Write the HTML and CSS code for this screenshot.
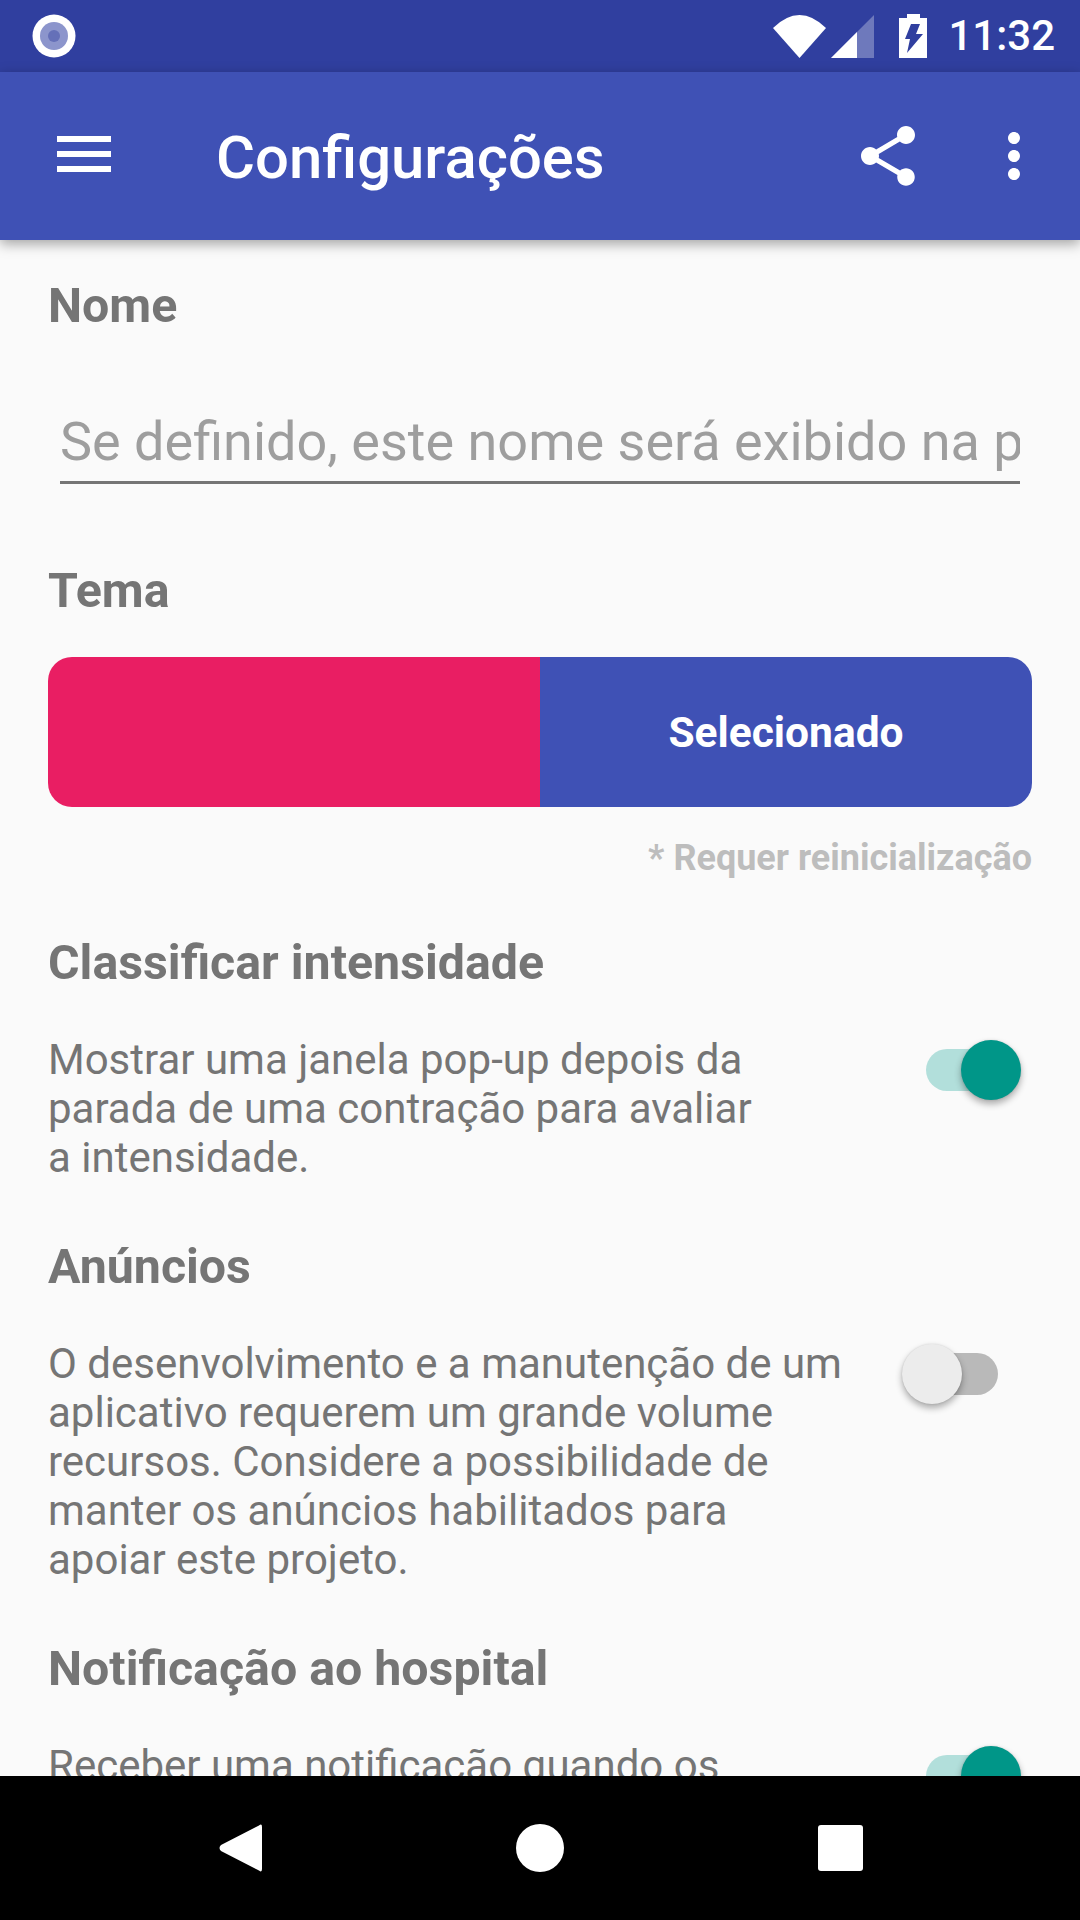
FILE: index.html
```html
<!DOCTYPE html>
<html lang="pt-br">
<head>
  <meta charset="UTF-8">
  <title>Configurações</title>
  <link rel="stylesheet" href="styles.css">
</head>
<body>

  <div class="status-bar">
    <svg class="notif-icon" width="44" height="44" viewBox="0 0 44 44">
      <circle cx="22" cy="22" r="21.5" fill="#fff"/>
      <circle cx="22" cy="22" r="14" fill="#8c95cc"/>
      <circle cx="22" cy="22" r="6" fill="#6570b8"/>
    </svg>
    <div class="status-right">
      <svg class="wifi-icon" width="53" height="43" viewBox="0 0 53 43">
        <path d="M0 13 Q26.5 -13 53 13 L26.5 43 Z" fill="#fff"/>
      </svg>
      <svg class="signal-icon" width="43" height="43" viewBox="0 0 43 43">
        <path d="M0 43 L43 0 V43 Z" fill="#fff" fill-opacity="0.3"/>
        <path d="M0 43 L26 17 V43 Z" fill="#fff"/>
      </svg>
      <svg class="battery-icon" width="28" height="44" viewBox="0 0 28 44">
        <path d="M8 0 H21 V4 H28 V44 H0 V4 H8 Z" fill="#fff"/>
        <path d="M12 10 H21 L17 20 H24 L8 39 L11 25 H6 Z" fill="#303f9f"/>
      </svg>
      <span class="clock">11:32</span>
    </div>
  </div>

  <div class="toolbar">
    <svg class="menu-icon" width="72" height="72" viewBox="0 0 24 24">
      <path d="M3 18h18v-2H3v2zm0-5h18v-2H3v2zm0-7v2h18V6H3z" fill="#fff"/>
    </svg>
    <h1 class="toolbar-title">Configurações</h1>
    <svg class="share-icon" width="72" height="72" viewBox="0 0 24 24">
      <path d="M18 16.08c-.76 0-1.44.3-1.96.77L8.91 12.7c.05-.23.09-.46.09-.7s-.04-.47-.09-.7l7.05-4.11c.54.5 1.25.81 2.04.81 1.66 0 3-1.34 3-3s-1.34-3-3-3-3 1.34-3 3c0 .24.04.47.09.7L8.04 9.81C7.5 9.31 6.79 9 6 9c-1.66 0-3 1.34-3 3s1.34 3 3 3c.79 0 1.5-.31 2.04-.81l7.12 4.16c-.05.21-.08.43-.08.65 0 1.61 1.31 2.92 2.92 2.92s2.92-1.31 2.92-2.92-1.31-2.92-2.92-2.92z" fill="#fff"/>
    </svg>
    <svg class="more-icon" width="72" height="72" viewBox="0 0 24 24">
      <path d="M12 8c1.1 0 2-.9 2-2s-.9-2-2-2-2 .9-2 2 .9 2 2 2zm0 2c-1.1 0-2 .9-2 2s.9 2 2 2 2-.9 2-2-.9-2-2-2zm0 6c-1.1 0-2 .9-2 2s.9 2 2 2 2-.9 2-2-.9-2-2-2z" fill="#fff"/>
    </svg>
  </div>

  <div class="content">
    <h2 class="section-title first">Nome</h2>
    <div class="name-input">Se definido, este nome será exibido na p</div>

    <h2 class="section-title theme-title">Tema</h2>
    <div class="theme-picker">
      <div class="theme-option pink"></div>
      <div class="theme-option indigo">Selecionado</div>
    </div>
    <div class="restart-note">* Requer reinicialização</div>

    <h2 class="section-title rate-title">Classificar intensidade</h2>
    <div class="setting-row">
      <p class="setting-text">Mostrar uma janela pop-up depois da<br>parada de uma contração para avaliar<br>a intensidade.</p>
      <div class="switch on"><span class="thumb"></span></div>
    </div>

    <h2 class="section-title">Anúncios</h2>
    <div class="setting-row">
      <p class="setting-text">O desenvolvimento e a manutenção de um<br>aplicativo requerem um grande volume<br>recursos. Considere a possibilidade de<br>manter os anúncios habilitados para<br>apoiar este projeto.</p>
      <div class="switch off"><span class="thumb"></span></div>
    </div>

    <h2 class="section-title">Notificação ao hospital</h2>
    <div class="setting-row">
      <p class="setting-text">Receber uma notificação quando os</p>
      <div class="switch on"><span class="thumb"></span></div>
    </div>
  </div>

  <div class="nav-bar">
    <svg class="nav-back" width="44" height="48" viewBox="0 0 44 48">
      <path d="M40 1.5 Q43 -1 43 3 V45 Q43 49 40 46.5 L2 27 Q-1 24 2 21 Z" fill="#fff"/>
    </svg>
    <span class="nav-home"></span>
    <span class="nav-recent"></span>
  </div>

</body>
</html>
```

FILE: styles.css
```css
* {
  box-sizing: border-box;
}

html, body {
  margin: 0;
  height: 100%;
}

body {
  width: 1080px;
  height: 1920px;
  display: flex;
  flex-direction: column;
  overflow: hidden;
  font-family: 'Roboto', 'Liberation Sans', sans-serif;
  background: #fafafa;
}

/* barra de status */
.status-bar {
  flex: none;
  height: 72px;
  background: #303f9f;
  display: flex;
  align-items: center;
  justify-content: space-between;
  padding: 0 25px 0 32px;
}

.status-right {
  display: flex;
  align-items: center;
  color: #fff;
}

.wifi-icon {
  margin-right: 5px;
}

.signal-icon {
  margin-right: 25px;
}

.battery-icon {
  margin-right: 21px;
}

.clock {
  font-size: 42px;
  font-weight: 500;
  line-height: 44px;
}

/* toolbar */
.toolbar {
  flex: none;
  height: 168px;
  background: #3f51b5;
  display: flex;
  align-items: center;
  padding-left: 48px;
  box-shadow: 0 4px 12px rgba(0, 0, 0, 0.35);
  position: relative;
  z-index: 1;
}

.menu-icon {
  margin-top: -4px;
}

.toolbar-title {
  margin: 4px 0 0 96px;
  flex: 1;
  font-size: 59.8px;
  font-weight: 500;
  color: #fff;
}

.more-icon {
  margin: 0 30px 0 54px;
}

/* conteudo */
.content {
  flex: 1;
  min-height: 0;
  overflow: hidden;
  padding: 0 48px;
}

.section-title {
  margin: 0;
  font-size: 48.3px;
  font-weight: 700;
  line-height: 56px;
  color: #757575;
}

.first {
  margin-top: 38px;
}

.name-input {
  margin: 77px 12px 0;
  height: 73px;
  border-bottom: 3px solid #757575;
  font-size: 54px;
  line-height: 62px;
  color: #9e9e9e;
  white-space: nowrap;
  overflow: hidden;
}

.theme-title {
  margin-top: 79px;
}

.theme-picker {
  margin-top: 38px;
  height: 150px;
  display: flex;
  border-radius: 24px;
  overflow: hidden;
}

.theme-option {
  flex: 1;
  display: flex;
  align-items: center;
  justify-content: center;
  font-size: 42.5px;
  font-weight: 700;
  color: #fff;
}

.pink {
  background: #e91e63;
}

.indigo {
  background: #3f51b5;
}

.restart-note {
  margin-top: 30px;
  text-align: right;
  font-size: 36px;
  font-weight: 700;
  line-height: 42px;
  color: #bdbdbd;
}

.rate-title {
  margin-top: 56px;
}

.setting-row {
  display: flex;
  justify-content: space-between;
  align-items: flex-start;
  margin-top: 44px;
  margin-bottom: 57px;
}

.setting-text {
  margin: 0;
  font-size: 42px;
  line-height: 49px;
  color: #757575;
}

/* switches */
.switch {
  flex: none;
  position: relative;
  width: 84px;
  height: 42px;
  margin-top: 14px;
  border-radius: 21px;
}

.switch.on {
  background: #b2dfdb;
  margin-right: 22px;
}

.switch.off {
  background: #b9b9b9;
  margin-right: 34px;
}

.thumb {
  position: absolute;
  top: -9px;
  width: 60px;
  height: 60px;
  border-radius: 50%;
  box-shadow: 0 4px 7px rgba(0, 0, 0, 0.32), 0 0 2px rgba(0, 0, 0, 0.12);
}

.on .thumb {
  right: -11px;
  background: #009688;
}

.off .thumb {
  left: -12px;
  background: #ececec;
}

/* barra de navegacao */
.nav-bar {
  flex: none;
  height: 144px;
  background: #000;
  position: relative;
  z-index: 2;
  display: flex;
  align-items: center;
  padding-left: 219px;
}

.nav-home {
  width: 48px;
  height: 48px;
  margin-left: 253px;
  border-radius: 50%;
  background: #fff;
}

.nav-recent {
  width: 45px;
  height: 46px;
  margin-left: 254px;
  border-radius: 3px;
  background: #fff;
}
```
